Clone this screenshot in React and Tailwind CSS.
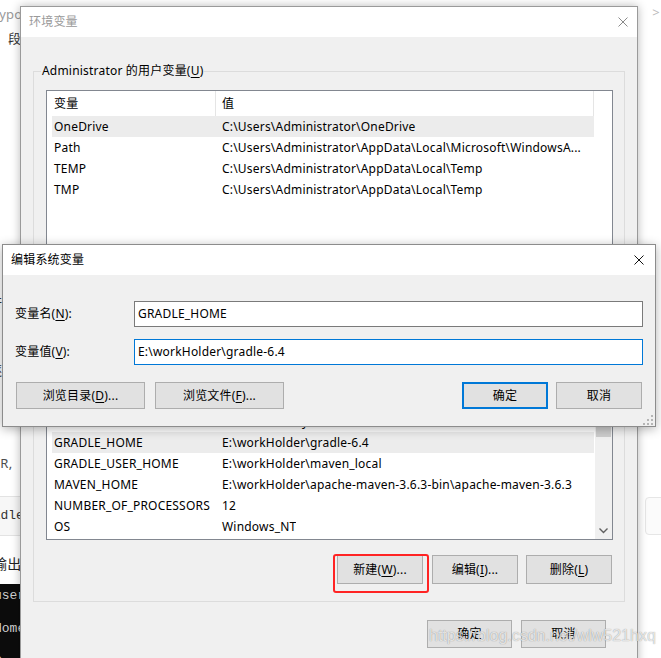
import React from "react";

const M = ({ c }) => (
  <span className="underline underline-offset-[2px] decoration-[1px]">{c}</span>
);

function XIcon({ color }) {
  return (
    <svg width="10" height="10" viewBox="0 0 10 10" className="block">
      <path d="M0.5 0.5 L9.5 9.5 M9.5 0.5 L0.5 9.5" stroke={color} strokeWidth="1" fill="none" />
    </svg>
  );
}

function Btn({ children, className }) {
  return (
    <div
      className={
        "flex items-center justify-center bg-[#e1e1e1] border border-[#adadad] text-[12px] text-black leading-none " +
        className
      }
    >
      {children}
    </div>
  );
}

function Header() {
  return (
    <div className="flex h-[25px] shrink-0 bg-white">
      <div className="w-[169px] border-r border-[#e5e5e5] pl-[7px] flex items-center">变量</div>
      <div className="w-[378px] border-r border-[#e5e5e5] pl-[6px] flex items-center">值</div>
    </div>
  );
}

function Row({ name, value, sel }) {
  return (
    <div
      className={
        "ml-[5px] w-[542px] flex h-[21px] shrink-0 items-center whitespace-nowrap overflow-hidden " +
        (sel ? "bg-[#ececec]" : "bg-white")
      }
    >
      <div className="w-[164px] shrink-0 pl-[2px] overflow-hidden">{name}</div>
      <div className="pl-[6px] overflow-hidden">{value}</div>
    </div>
  );
}

const userRows = [
  ["OneDrive", "C:\\Users\\Administrator\\OneDrive"],
  ["Path", "C:\\Users\\Administrator\\AppData\\Local\\Microsoft\\WindowsA..."],
  ["TEMP", "C:\\Users\\Administrator\\AppData\\Local\\Temp"],
  ["TMP", "C:\\Users\\Administrator\\AppData\\Local\\Temp"],
];

const sysRows = [
  ["ComSpec", "C:\\Windows\\system32\\cmd.exe"],
  ["DriverData", "C:\\Windows\\System32\\Drivers\\DriverData"],
  ["GRADLE_HOME", "E:\\workHolder\\gradle-6.4"],
  ["GRADLE_USER_HOME", "E:\\workHolder\\maven_local"],
  ["MAVEN_HOME", "E:\\workHolder\\apache-maven-3.6.3-bin\\apache-maven-3.6.3"],
  ["NUMBER_OF_PROCESSORS", "12"],
  ["OS", "Windows_NT"],
  ["Path", "C:\\Windows\\system32"],
];

export default function App() {
  return (
    <div className="relative w-[661px] h-[658px] overflow-hidden bg-white font-['Noto_Sans','Noto_Sans_CJK_SC',sans-serif] text-[12px] tracking-[0.2px] text-black">
      {/* background page */}
      <div className="absolute inset-0 flex flex-col bg-white">
        <div className="h-[30px] shrink-0 flex justify-between items-start pt-[6px]">
          <span className="-ml-[8px] text-[13px] leading-[16px] text-[#999]">Typora</span>
          <span className="mr-[1px] text-[13px] leading-[12px] text-[#bbb]">&gt;</span>
        </div>
        <div className="h-[16px] shrink-0 pl-[8px] text-[13px] leading-[16px] text-[#333] whitespace-nowrap">段落格式</div>
        <div className="h-[249px] shrink-0" />
        <div className="h-[16px] shrink-0 -ml-[11px] text-[13px] leading-[16px] text-[#333]">行</div>
        <div className="h-[51px] shrink-0" />
        <div className="h-[16px] shrink-0 -ml-[11px] text-[13px] leading-[16px] text-[#333]">逐</div>
        <div className="h-[77px] shrink-0" />
        <div className="h-[16px] shrink-0 -ml-[10px] text-[13px] leading-[16px] text-[#4d4d4d] whitespace-nowrap">OR, </div>
        <div className="h-[25px] shrink-0" />
        <div className="h-[40px] shrink-0 flex">
          <div className="w-[600px] bg-[#f7f7f7] border-y border-[#e3e3e3] flex items-center -ml-[23px] font-['Liberation_Mono',monospace] text-[13px] tracking-normal text-[#333] whitespace-nowrap">
            gradle -v
          </div>
          <div className="ml-auto w-[20px] -mr-[4px] mt-[1px] h-[38px] rounded-[4px] border border-[#e6e6e6] bg-[#fbfbfb]" />
        </div>
        <div className="h-[19px] shrink-0" />
        <div className="h-[18px] shrink-0 -ml-[7px] text-[14px] leading-[18px] text-[#222] whitespace-nowrap">输出</div>
        <div className="h-[11px] shrink-0" />
        <div className="h-[90px] w-[600px] shrink-0 bg-[#0c0c0c] font-['Liberation_Mono',monospace] text-[13px] tracking-normal text-[#cfcfcf] whitespace-nowrap pt-[4px]">
          <div className="h-[16px] leading-[16px] -ml-[6px]">user</div>
          <div className="h-[17px]" />
          <div className="h-[16px] leading-[16px] -ml-[6px]">Home</div>
          <div className="h-[17px]" />
          <div className="h-[16px] leading-[16px] -ml-[6px]">Gr</div>
        </div>
      </div>

      {/* main window */}
      <div className="absolute left-[20px] top-[6px] w-[618px] h-[700px] bg-[#f0f0f0] border border-[#9a9a9a] shadow-[0_0_9px_rgba(0,0,0,0.28)] flex flex-col">
        <div className="h-[30px] shrink-0 bg-white flex items-center justify-between pl-[8px] pr-[9px]">
          <span className="text-[12px] text-[#999]">环境变量</span>
          <XIcon color="#8a8a8a" />
        </div>
        <div className="px-[12px] pt-[34px] flex flex-col">
          {/* user group */}
          <div className="relative border border-[#dcdcdc] pt-[18px] pl-[12px] pr-[11px] pb-[17px]">
            <div className="absolute -top-[10px] left-[7px] px-[1px] bg-[#f0f0f0] leading-[18px] whitespace-nowrap">
              Administrator 的用户变量(<M c="U" />)
            </div>
            <div className="h-[174px] border border-[#828790] bg-white flex flex-col overflow-hidden">
              <Header />
              {userRows.map((r, i) => (
                <Row key={i} name={r[0]} value={r[1]} sel={i === 0} />
              ))}
            </div>
            <div className="mt-[16px] flex justify-end mr-[1px]">
              <Btn className="w-[86px] h-[29px]">新建(<M c="N" />)...</Btn>
              <Btn className="w-[86px] h-[29px] ml-[9px]">编辑(<M c="E" />)...</Btn>
              <Btn className="w-[86px] h-[29px] ml-[8px]">删除(<M c="D" />)</Btn>
            </div>
          </div>
          {/* system group */}
          <div className="relative mt-[19px] border border-[#dcdcdc] pt-[17px] pl-[12px] pr-[11px] pb-[17px]">
            <div className="absolute -top-[10px] left-[7px] px-[1px] bg-[#f0f0f0] leading-[18px] whitespace-nowrap">
              系统变量(<M c="S" />)
            </div>
            <div className="h-[176px] border border-[#828790] bg-white flex overflow-hidden">
              <div className="flex-1 flex flex-col overflow-hidden">
                <Header />
                {sysRows.map((r, i) => (
                  <Row key={i} name={r[0]} value={r[1]} sel={i === 2} />
                ))}
              </div>
              <div className="w-[17px] shrink-0 bg-[#f0f0f0] flex flex-col justify-between">
                <div className="h-[72px] mx-[1px] bg-[#cdcdcd]" />
                <div className="h-[17px] flex items-center justify-center">
                  <svg width="9" height="6" viewBox="0 0 9 6">
                    <path d="M0.5 0.5 L4.5 4.5 L8.5 0.5" stroke="#606060" strokeWidth="1.4" fill="none" />
                  </svg>
                </div>
              </div>
            </div>
            <div className="mt-[15px] flex justify-end mr-[1px]">
              <Btn className="w-[86px] h-[29px]">新建(<M c="W" />)...</Btn>
              <Btn className="w-[86px] h-[29px] ml-[9px]">编辑(<M c="I" />)...</Btn>
              <Btn className="w-[86px] h-[29px] ml-[8px]">删除(<M c="L" />)</Btn>
            </div>
          </div>
          <div className="mt-[18px] flex justify-end pr-[19px]">
            <Btn className="w-[85px] h-[28px]">确定</Btn>
            <Btn className="w-[85px] h-[28px] ml-[9px]">取消</Btn>
          </div>
        </div>
      </div>

      {/* edit dialog */}
      <div className="absolute left-[2px] top-[244px] w-[654px] h-[183px] bg-[#f0f0f0] border border-[#8c8c8c] shadow-[0_2px_10px_rgba(0,0,0,0.3)] flex flex-col">
        <div className="h-[30px] shrink-0 bg-white flex items-center justify-between pl-[8px] pr-[11px]">
          <span className="text-[12px] text-black">编辑系统变量</span>
          <XIcon color="#111" />
        </div>
        <div className="px-[12px] pt-[26px] flex flex-col">
          <div className="flex items-center h-[26px]">
            <div className="w-[119px] shrink-0">变量名(<M c="N" />):</div>
            <div className="flex-1 h-[26px] bg-white border border-[#7a7a7a] flex items-center pl-[3px]">GRADLE_HOME</div>
          </div>
          <div className="flex items-center h-[26px] mt-[12px]">
            <div className="w-[119px] shrink-0">变量值(<M c="V" />):</div>
            <div className="flex-1 h-[26px] bg-white border border-[#0078d7] flex items-center pl-[3px]">E:\workHolder\gradle-6.4</div>
          </div>
          <div className="mt-[17px] flex items-center ml-[1px] mr-[1px]">
            <Btn className="w-[129px] h-[27px]">浏览目录(<M c="D" />)...</Btn>
            <Btn className="w-[129px] h-[27px] ml-[10px]">浏览文件(<M c="F" />)...</Btn>
            <div className="flex-1" />
            <Btn className="w-[86px] h-[27px] !border-2 !border-[#0078d7]">确定</Btn>
            <Btn className="w-[86px] h-[27px] ml-[8px]">取消</Btn>
          </div>
        </div>
        <svg width="10" height="10" viewBox="0 0 10 10" className="absolute right-[2px] bottom-[1px]">
          <rect x="8" y="0" width="2" height="2" fill="#b5b5b5" />
          <rect x="4" y="4" width="2" height="2" fill="#b5b5b5" />
          <rect x="8" y="4" width="2" height="2" fill="#b5b5b5" />
          <rect x="0" y="8" width="2" height="2" fill="#b5b5b5" />
          <rect x="4" y="8" width="2" height="2" fill="#b5b5b5" />
          <rect x="8" y="8" width="2" height="2" fill="#b5b5b5" />
        </svg>
      </div>

      {/* annotation */}
      <div className="absolute left-[333px] top-[554px] w-[96px] h-[39px] border-2 border-[#ff2424] rounded-[3px]" />
      <div className="absolute left-[429px] top-[626px] text-[16px] leading-[20px] whitespace-nowrap text-white/75 tracking-normal font-['Liberation_Sans',sans-serif] [text-shadow:0_0_1px_rgba(0,0,0,0.45)]">
        https://blog.csdn.net/wlw521hxq
      </div>
    </div>
  );
}
